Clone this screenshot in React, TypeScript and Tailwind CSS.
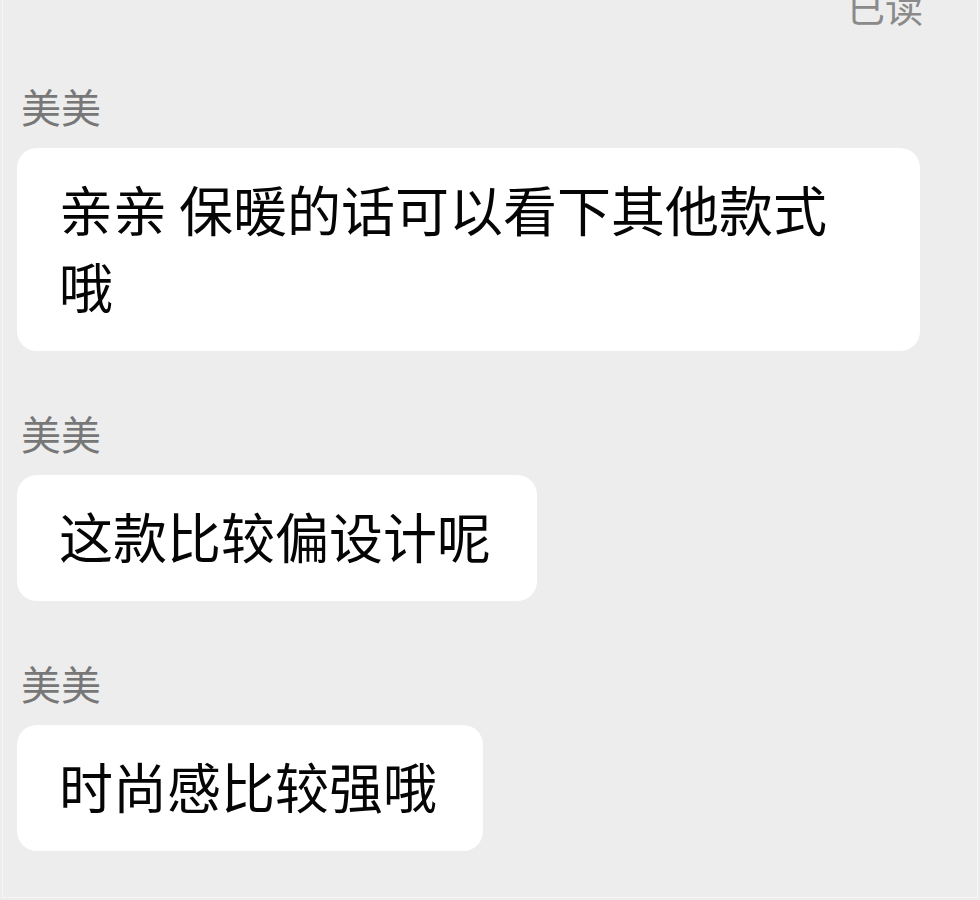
import React from "react";

const font = "font-['Noto_Sans_CJK_SC','Noto_Sans_CJK_JP',sans-serif]";

function Message({ text, first, wide }: { text: string; first?: boolean; wide?: boolean }) {
  return (
    <div className={`flex flex-col items-start ${first ? "mt-[61px]" : "mt-[62px]"}`}>
      <div className="text-[40px] leading-[40px] text-[#777777] ml-[4px]">美美</div>
      <div
        className={`mt-[22px] bg-white rounded-[20px] pl-[42px] pr-[46px] pt-[22px] pb-[27px] text-[54px] leading-[77px] text-[#050505] ${
          wide ? "w-[903px]" : ""
        }`}
      >
        {text}
      </div>
    </div>
  );
}

export default function App() {
  return (
    <div className={`w-[980px] h-[900px] bg-[#ededed] overflow-hidden ${font}`}>
      <div className="ml-[2px] w-[976px] h-[898px] border-l border-r border-b border-[#f6f6f6] overflow-hidden">
        <div className="flex flex-col pl-[14px]">
          <div className="flex justify-end pr-[54px] mt-[-13px] h-[38px]">
            <span className="text-[38px] leading-[38px] text-[#8a8a8a]">已读</span>
          </div>
          <Message first wide text="亲亲 保暖的话可以看下其他款式哦" />
          <Message text="这款比较偏设计呢" />
          <Message text="时尚感比较强哦" />
        </div>
      </div>
    </div>
  );
}
